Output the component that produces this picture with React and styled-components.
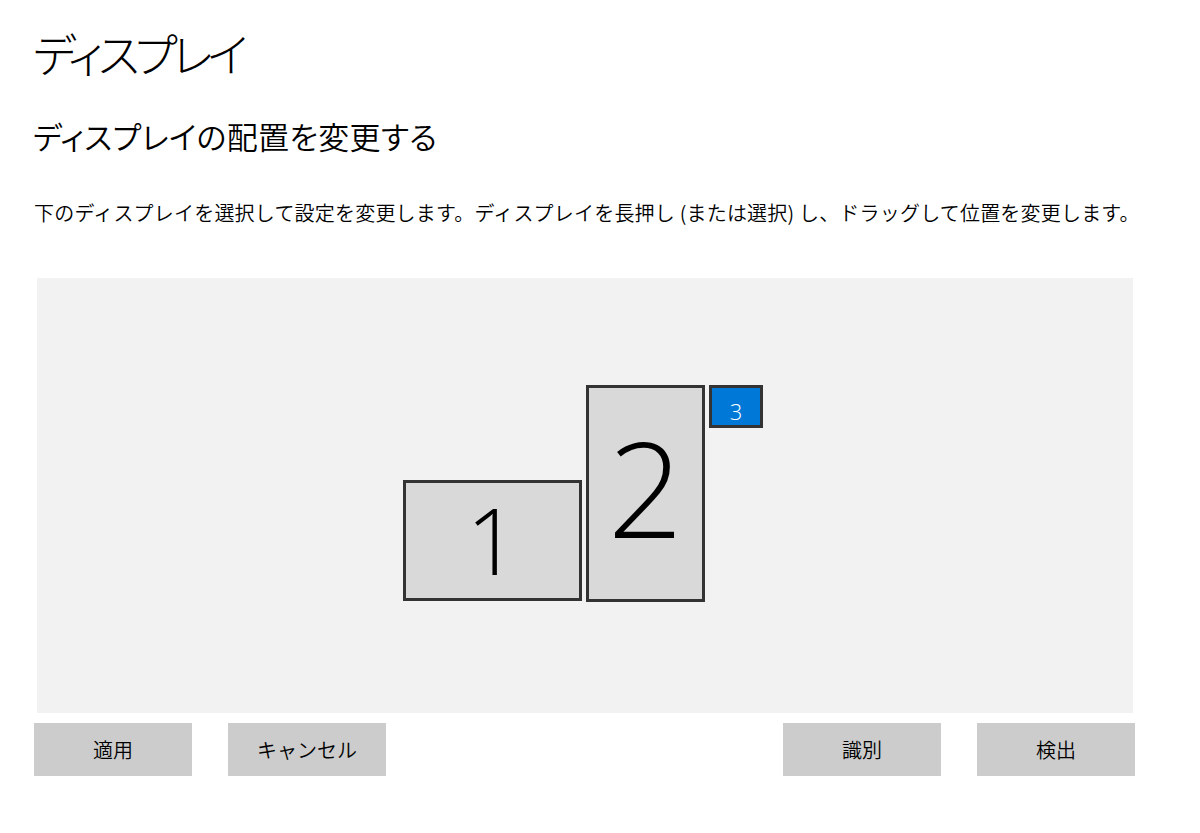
import React from "react";
import styled, { createGlobalStyle } from "styled-components";

const GlobalStyle = createGlobalStyle`
  html, body {
    margin: 0;
    padding: 0;
    background: #ffffff;
  }
  body {
    font-family: "Noto Sans CJK JP", "Noto Sans", sans-serif;
    color: #000000;
  }
`;

// nudge: moves the digit off the box centre (px, + is down)
const monitors = [
  { id: 1, left: 366, top: 202, width: 179, height: 121, size: 92, nudge: -1, selected: false },
  { id: 2, left: 549, top: 107, width: 119, height: 217, size: 132, nudge: -7, selected: false },
  { id: 3, left: 672, top: 107, width: 54, height: 43, size: 22, nudge: 4, selected: true },
];

const App = () => {
  return (
    <Page>
      <GlobalStyle />
      <Title>ディスプレイ</Title>
      <Subtitle>ディスプレイの配置を変更する</Subtitle>
      <Description>
        下のディスプレイを選択して設定を変更します。ディスプレイを長押し (または選択) し、ドラッグして位置を変更します。
      </Description>
      <Canvas>
        {monitors.map((m) => (
          <Monitor
            key={m.id}
            $selected={m.selected}
            $size={m.size}
            $nudge={m.nudge}
            style={{ left: m.left, top: m.top, width: m.width, height: m.height }}
          >
            {m.id}
          </Monitor>
        ))}
      </Canvas>
      <ButtonRow>
        <ButtonGroup>
          <Button>適用</Button>
          <Button>キャンセル</Button>
        </ButtonGroup>
        <ButtonGroup>
          <Button>識別</Button>
          <Button>検出</Button>
        </ButtonGroup>
      </ButtonRow>
    </Page>
  );
};

export default App;

const Page = styled.div`
  width: 1200px;
  box-sizing: border-box;
  padding: 0 65px 0 34px;
`;

const Title = styled.h1`
  margin: 0 0 0 -1px;
  padding-top: 24px;
  font-size: 46px;
  font-weight: 300;
  line-height: 56px;
  letter-spacing: -5px;
  font-feature-settings: "palt";
`;

const Subtitle = styled.h2`
  margin: 0 0 0 -1px;
  padding-top: 36px;
  font-size: 31px;
  font-weight: 350;
  line-height: 40px;
  letter-spacing: 0.3px;
  font-feature-settings: "palt";
`;

const Description = styled.p`
  margin: 0;
  padding-top: 43px;
  font-size: 20px;
  font-weight: 350;
  line-height: 28px;
  letter-spacing: 0.2px;
  white-space: nowrap;
`;

const Canvas = styled.div`
  position: relative;
  margin: 51px 0 0 3px;
  width: 1096px;
  height: 435px;
  background: #f2f2f2;
`;

const Monitor = styled.div`
  position: absolute;
  box-sizing: border-box;
  display: flex;
  align-items: center;
  justify-content: center;
  padding-top: ${(p) => Math.max(0, p.$nudge * 2)}px;
  padding-bottom: ${(p) => Math.max(0, -p.$nudge * 2)}px;
  border: 3px solid #333333;
  background: ${(p) => (p.$selected ? "#0078d7" : "#d9d9d9")};
  color: ${(p) => (p.$selected ? "#ffffff" : "#000000")};
  font-family: "Open Sans", "Liberation Sans", sans-serif;
  font-weight: 300;
  font-size: ${(p) => p.$size}px;
  line-height: 1;
`;

const ButtonRow = styled.div`
  display: flex;
  justify-content: space-between;
  margin-top: 10px;
  width: 1101px;
`;

const ButtonGroup = styled.div`
  display: flex;
  gap: 36px;
`;

const Button = styled.button`
  width: 158px;
  height: 53px;
  border: none;
  background: #cccccc;
  color: #000000;
  font-family: "Noto Sans CJK JP", sans-serif;
  font-size: 20px;
  font-weight: 350;
  padding: 0;
  cursor: pointer;
`;
